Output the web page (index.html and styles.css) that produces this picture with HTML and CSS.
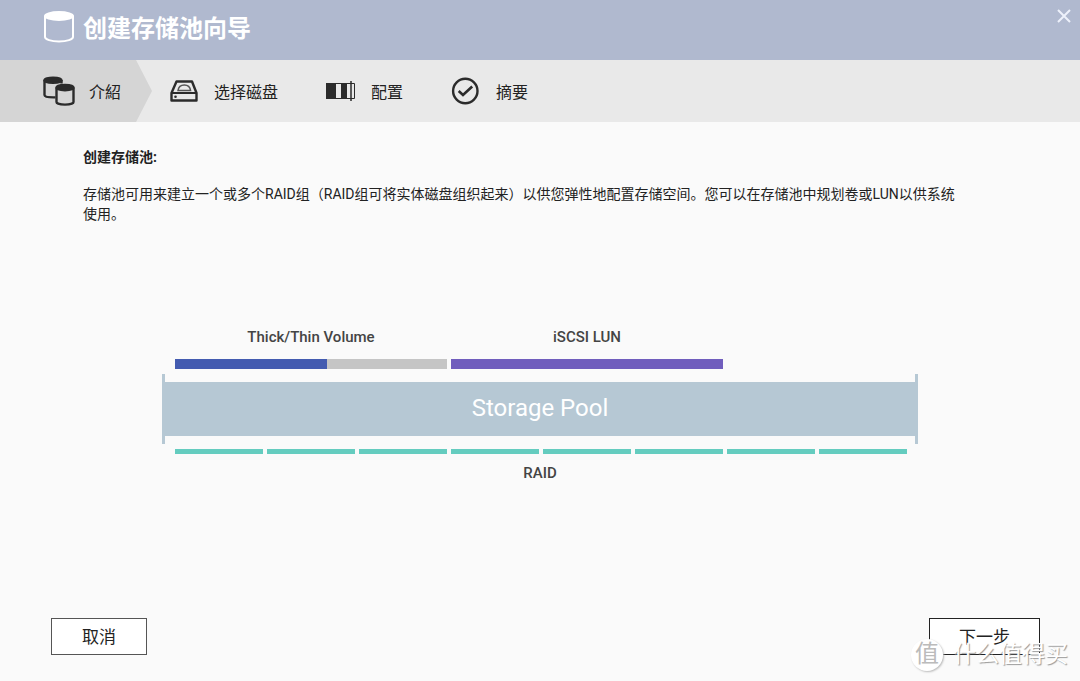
FILE: index.html
```html
<!DOCTYPE html>
<html lang="zh-CN">
<head>
<meta charset="utf-8">
<title>创建存储池向导</title>
<link rel="stylesheet" href="styles.css">
</head>
<body>
<div class="wizard">
  <header class="titlebar">
    <svg class="titlebar-icon" width="32" height="34" viewBox="0 0 32 34" aria-hidden="true">
      <path d="M2 6v21c0 2.400 6 4.500 14 4.500s14-2.100 14-4.500V6" fill="none" stroke="#fff" stroke-width="2"/>
      <ellipse cx="16" cy="6" rx="15" ry="5" fill="#fff"/>
    </svg>
    <h1 class="title">创建存储池向导</h1>
    <button class="close" type="button" aria-label="关闭">
      <svg width="14" height="14" viewBox="0 0 14 14"><path d="M1 1l12 12M13 1L1 13" stroke="#edf1fb" stroke-width="2"/></svg>
    </button>
  </header>

  <ol class="steps">
    <li class="step step-active" aria-current="step">
      <svg width="32" height="32" viewBox="0 0 32 32" fill="none" stroke="#2b2b2b" stroke-width="2.400" aria-hidden="true">
        <path d="M1.500 5v15c0 1.600 4 2.400 9 2.400h2M18.500 5v3.500"/>
        <ellipse cx="10" cy="5.200" rx="8.500" ry="2.600" fill="#2b2b2b"/>
        <path d="M13.500 12.500v14.500c0 1.600 4 2.600 8.500 2.600s8.500-1 8.500-2.600V12.500"/>
        <ellipse cx="22" cy="12.600" rx="8.500" ry="2.600" fill="#2b2b2b"/>
      </svg>
      <span class="step-name">介紹</span>
    </li>
    <li class="step">
      <svg width="32" height="32" viewBox="0 0 32 32" fill="none" stroke="#2b2b2b" aria-hidden="true">
        <path d="M8.500 6.500h15.500l4.500 11.500v7.500h-25v-7.500z" stroke-width="2.400" stroke-linejoin="round"/>
        <path d="M4 18h24.500" stroke-width="2"/>
        <path d="M10 15.500c.5-3.500 3-5.500 6.300-5.500s5.800 2 6.300 5.500z" stroke="#555" stroke-width="1.500"/>
        <circle cx="7.500" cy="21.700" r="1.300" fill="#2b2b2b" stroke="none"/>
      </svg>
      <span class="step-name">选择磁盘</span>
    </li>
    <li class="step">
      <svg width="32" height="32" viewBox="0 0 32 32" aria-hidden="true">
        <path d="M1.500 8.500h28v15h-28z" fill="none" stroke="#2b2b2b"/>
        <path d="M1 8h10v16H1zM16 8h6v16h-6z" fill="#2b2b2b"/>
        <path d="M26 6v20" stroke="#2b2b2b" stroke-width="1.500"/>
      </svg>
      <span class="step-name">配置</span>
    </li>
    <li class="step">
      <svg width="32" height="32" viewBox="0 0 32 32" fill="none" stroke="#2b2b2b" aria-hidden="true">
        <circle cx="15.300" cy="16" r="12.200" stroke-width="2.400"/>
        <path d="M8.700 16l4.300 4 9.200-8.500" stroke-width="2.600"/>
      </svg>
      <span class="step-name">摘要</span>
    </li>
  </ol>

  <main class="content">
    <h2 class="heading">创建存储池:</h2>
    <p class="intro">存储池可用来建立一个或多个RAID组（RAID组可将实体磁盘组织起来）以供您弹性地配置存储空间。您可以在存储池中规划卷或LUN以供系统使用。</p>

    <section class="diagram" aria-label="Storage Pool">
      <div class="volumes">
        <div class="volume">
          <span class="label">Thick/Thin Volume</span>
          <div class="bar bar-free"><div class="bar-used" style="width: 56%"></div></div>
        </div>
        <div class="volume">
          <span class="label">iSCSI LUN</span>
          <div class="bar bar-lun"></div>
        </div>
      </div>
      <div class="pool"><div class="pool-body">Storage Pool</div></div>
      <div class="raid">
        <i></i><i></i><i></i><i></i><i></i><i></i><i></i><i></i>
      </div>
      <div class="label raid-label">RAID</div>
    </section>
  </main>

  <footer class="actions">
    <button class="button" type="button">取消</button>
    <button class="button button-next" type="button">下一步</button>
  </footer>

  <div class="watermark">
    <span class="watermark-logo">值</span>
    <span>什么值得买</span>
  </div>
</div>
</body>
</html>
```

FILE: styles.css
```css
* {
  box-sizing: border-box;
}

body {
  margin: 0;
  background: #fafafa;
  color: #222;
  font-family: Roboto, "Noto Sans CJK SC", sans-serif;
  font-size: 14px;
  line-height: 20px;
}

.wizard {
  position: relative;
  display: flex;
  flex-direction: column;
  min-height: 100vh;
}

.titlebar {
  display: flex;
  align-items: center;
  gap: 8px;
  height: 60px;
  padding: 0 8px 6px 43px;
  background: #b0b9cf;
}

.title {
  flex: 1;
  margin: 0;
  padding-top: 3px;
  color: #fff;
  font-size: 24px;
  line-height: 32px;
}

.close {
  display: flex;
  align-self: flex-start;
  margin-top: 8px;
  padding: 1px;
  border: 0;
  background: none;
}

.steps {
  display: flex;
  gap: 47px;
  height: 62px;
  margin: 0;
  padding: 0;
  list-style: none;
  background: #e9e9e9;
  font-size: 16px;
}

.step {
  display: flex;
  align-items: center;
  gap: 14px;
}

.step-name {
  padding-top: 3px;
}

.step-active {
  margin-right: -31px;
  padding: 0 31px 0 43px;
  background: #d5d5d5;
  clip-path: polygon(0 0, calc(100% - 16px) 0, 100% 50%, calc(100% - 16px) 100%, 0 100%);
}

.content {
  flex: 1;
  padding: 25px 83px 0;
}

.heading {
  margin: 0 0 17px;
  font-size: 14px;
}

.intro {
  max-width: 884px;
  margin: 0;
}

.diagram {
  width: 756px;
  max-width: 100%;
  margin: 103px auto 0;
}

.volumes,
.raid {
  display: grid;
  grid-template-columns: repeat(8, 1fr);
  gap: 4px;
  padding: 0 11px 0 13px;
}

.volume {
  grid-column: span 3;
  text-align: center;
}

.label {
  color: #444;
  font-size: 15px;
  font-weight: 500;
}

.bar {
  height: 10px;
  margin-top: 12px;
}

.bar-free {
  background: #c5c5c5;
}

.bar-used {
  height: 100%;
  background: #435bb0;
}

.bar-lun {
  background: #705dbd;
}

.pool {
  margin: 5px 0;
  padding: 8px 0;
  border: solid #b6c8d4;
  border-width: 0 3px;
}

.pool-body {
  height: 54px;
  background: #b6c8d4;
  color: #fff;
  font-size: 24px;
  line-height: 52px;
  text-align: center;
}

.raid i {
  height: 5px;
  background: #64ccbf;
}

.raid-label {
  margin-top: 9px;
  text-align: center;
}

.actions {
  display: flex;
  justify-content: space-between;
  padding: 0 40px 26px 51px;
}

.button {
  width: 96px;
  height: 37px;
  padding: 0;
  border: 1px solid #555;
  background: #fff;
  color: #222;
  font: inherit;
  font-size: 17px;
}

.button-next {
  width: 111px;
  border-color: #222;
}

.watermark {
  position: absolute;
  right: 12px;
  bottom: 10px;
  display: flex;
  align-items: center;
  gap: 10px;
  color: #fff;
  font-size: 23px;
  line-height: 32px;
  text-shadow: 1px 1px 1px #999;
  pointer-events: none;
}

.watermark-logo {
  width: 32px;
  height: 32px;
  border-radius: 50%;
  background: #fff;
  box-shadow: 1px 1px 2px #bbb;
  color: #bbb;
  font-size: 24px;
  line-height: 30px;
  text-align: center;
  text-shadow: none;
}
```
